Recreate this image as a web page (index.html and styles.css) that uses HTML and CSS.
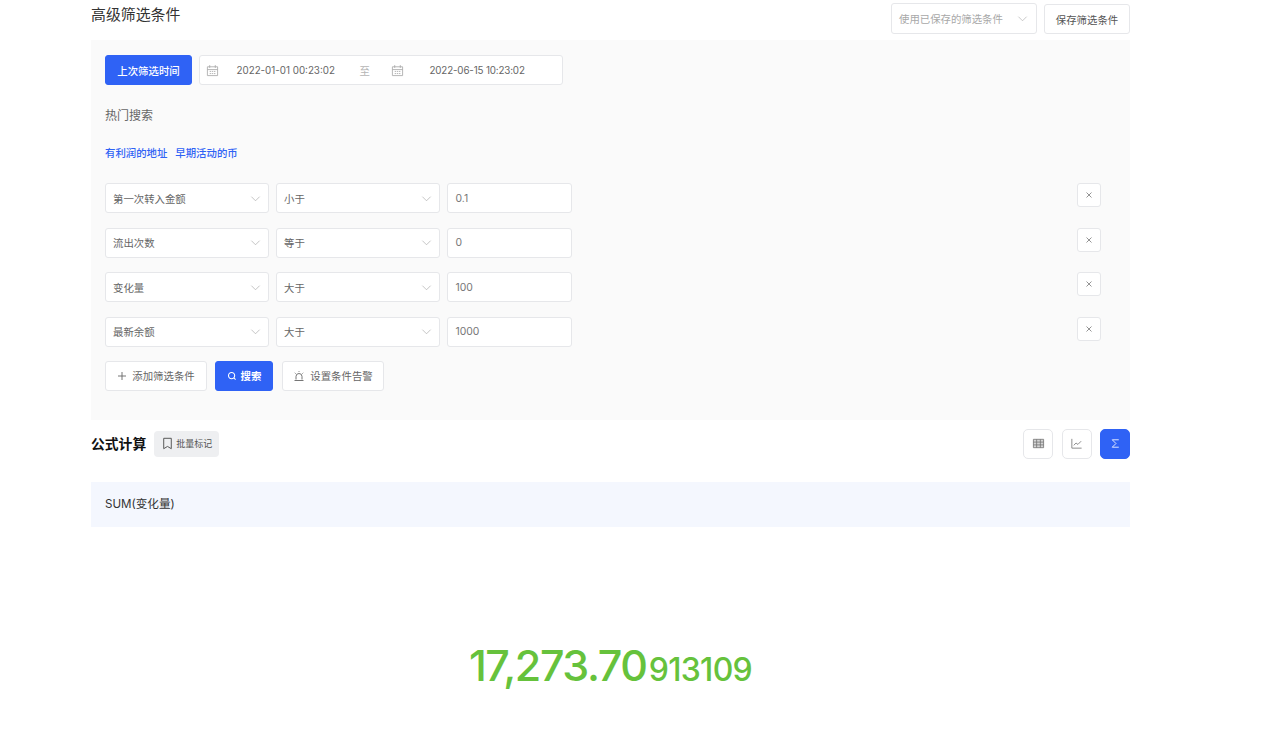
FILE: index.html
```html
<!DOCTYPE html>
<html lang="zh-CN">
<head>
<meta charset="utf-8">
<title>高级筛选条件</title>
<link rel="stylesheet" href="styles.css">
</head>
<body>
<main class="page">
  <header class="top">
    <h1 class="title">高级筛选条件</h1>
    <div class="top-actions">
      <div class="box saved">
        <span>使用已保存的筛选条件</span>
        <svg class="chev" viewBox="0 0 12 12"><path d="M1.500 4l4.500 4.500L10.500 4"/></svg>
      </div>
      <button class="box save">保存筛选条件</button>
    </div>
  </header>

  <section class="panel">
    <div class="date-row">
      <button class="primary last">上次筛选时间</button>
      <div class="box range">
        <svg class="cal" viewBox="0 0 14 14"><path d="M1.500 3h11v9.500h-11zM1.500 6h11M4 1.200v3M10 1.200v3M4 8h1.500M6.300 8h1.500M8.600 8h1.500M4 10.300h1.500M6.300 10.300h1.500M8.600 10.300h1.500"/></svg>
        <span class="date d1">2022-01-01 00:23:02</span>
        <span class="to">至</span>
        <svg class="cal" viewBox="0 0 14 14"><path d="M1.500 3h11v9.500h-11zM1.500 6h11M4 1.200v3M10 1.200v3M4 8h1.500M6.300 8h1.500M8.600 8h1.500M4 10.300h1.500M6.300 10.300h1.500M8.600 10.300h1.500"/></svg>
        <span class="date d2">2022-06-15 10:23:02</span>
      </div>
    </div>
    <div class="hot">热门搜索</div>
    <div class="links"><a>有利润的地址</a><a>早期活动的币</a></div>

    <div class="rows">
      <div class="row">
        <div class="box sel"><span>第一次转入金额</span><svg class="chev" viewBox="0 0 12 12"><path d="M1.500 4l4.500 4.500L10.500 4"/></svg></div>
        <div class="box sel"><span>小于</span><svg class="chev" viewBox="0 0 12 12"><path d="M1.500 4l4.500 4.500L10.500 4"/></svg></div>
        <div class="box val">0.1</div>
        <button class="box del"><svg viewBox="0 0 8 8"><path d="M1.500 1.500l5 5M6.500 1.500l-5 5"/></svg></button>
      </div>
      <div class="row">
        <div class="box sel"><span>流出次数</span><svg class="chev" viewBox="0 0 12 12"><path d="M1.500 4l4.500 4.500L10.500 4"/></svg></div>
        <div class="box sel"><span>等于</span><svg class="chev" viewBox="0 0 12 12"><path d="M1.500 4l4.500 4.500L10.500 4"/></svg></div>
        <div class="box val">0</div>
        <button class="box del"><svg viewBox="0 0 8 8"><path d="M1.500 1.500l5 5M6.500 1.500l-5 5"/></svg></button>
      </div>
      <div class="row">
        <div class="box sel"><span>变化量</span><svg class="chev" viewBox="0 0 12 12"><path d="M1.500 4l4.500 4.500L10.500 4"/></svg></div>
        <div class="box sel"><span>大于</span><svg class="chev" viewBox="0 0 12 12"><path d="M1.500 4l4.500 4.500L10.500 4"/></svg></div>
        <div class="box val">100</div>
        <button class="box del"><svg viewBox="0 0 8 8"><path d="M1.500 1.500l5 5M6.500 1.500l-5 5"/></svg></button>
      </div>
      <div class="row">
        <div class="box sel"><span>最新余额</span><svg class="chev" viewBox="0 0 12 12"><path d="M1.500 4l4.500 4.500L10.500 4"/></svg></div>
        <div class="box sel"><span>大于</span><svg class="chev" viewBox="0 0 12 12"><path d="M1.500 4l4.500 4.500L10.500 4"/></svg></div>
        <div class="box val">1000</div>
        <button class="box del"><svg viewBox="0 0 8 8"><path d="M1.500 1.500l5 5M6.500 1.500l-5 5"/></svg></button>
      </div>
    </div>

    <div class="actions">
      <button class="box act add"><svg viewBox="0 0 10 10"><path d="M5 1v8M1 5h8"/></svg>添加筛选条件</button>
      <button class="primary act search"><svg viewBox="0 0 12 12"><circle cx="5.500" cy="5.500" r="3.700"/><path d="M8.300 8.300l2 2"/></svg>搜索</button>
      <button class="box act alarm"><svg viewBox="0 0 12 12"><path d="M3 9.500V6.500a3 3 0 0 1 6 0v3M1.500 10.500h9M6 1v.8M1.800 2.800l.8.8M10.200 2.800l-.8.8"/></svg>设置条件告警</button>
    </div>
  </section>

  <section class="formula-head">
    <div class="formula-left">
      <h2 class="formula-title">公式计算</h2>
      <button class="mark"><svg viewBox="0 0 12 12"><path d="M2.500 1.200h7v9.600L6 8.700l-3.500 2.100z"/></svg>批量标记</button>
    </div>
    <div class="views">
      <button class="view"><svg viewBox="0 0 14 14"><path class="fillcell" d="M1.500 2.500h11v9h-11z"/><path d="M1.500 2.500h11v9h-11zM1.500 5.500h11M1.500 8.500h11M5 2.500v9M9 2.500v9"/></svg></button>
      <button class="view"><svg viewBox="0 0 14 14"><path d="M2 2v10h10.500M4 9l2.500-2.500 2 1.500L12 4.500"/></svg></button>
      <button class="view on"><svg viewBox="0 0 14 14"><path d="M10.500 3H3.500L7.500 7l-4 4h7"/></svg></button>
    </div>
  </section>

  <div class="expr">SUM(变化量)</div>

  <div class="result"><span class="big">17,273.70</span><span class="small">913109</span></div>
</main>
</body>
</html>
```

FILE: styles.css
```css
* { box-sizing: border-box; }
html, body { margin: 0; padding: 0; background: #fff; }
body {
  font-family: Inter, "Noto Sans CJK SC", sans-serif;
  color: #555;
  font-size: 10.400px;
}
button { font: inherit; cursor: pointer; }
svg { display: block; fill: none; stroke: currentColor; }

.page { width: 1039px; margin-left: 91px; height: 736px; overflow: hidden; }

.top { display: flex; justify-content: space-between; height: 40px; }
.title { margin: 6px 0 0; font-size: 14.900px; line-height: 18px; font-weight: 400; color: #333; }
.top-actions { display: flex; gap: 7px; align-items: flex-start; padding-top: 3px; }

.box { background: #fff; border: 1px solid #e6e7ea; border-radius: 3px; }
.saved { width: 146px; height: 31px; display: flex; align-items: center; justify-content: space-between; padding: 0 7px; color: #a8a8a8; }
.saved .chev { color: #b5b5b5; margin-right: 1px; }
.save { width: 86px; height: 30px; margin-top: 1px; color: #555; padding: 0; }
.chev { width: 11px; height: 11px; stroke-width: .8; color: #b0b0b0; flex: none; }

.panel { background: #fafafa; height: 380px; padding: 15px 14px 0; }

.primary { background: #2f62f5; border: 1px solid #2f62f5; border-radius: 3px; color: #fff; font-weight: 500; padding: 0; }
.date-row { display: flex; gap: 7px; height: 30px; }
.last { width: 87px; height: 30px; }
.range { width: 364px; height: 30px; display: flex; align-items: center; padding-left: 5.500px; color: #666; }
.cal { width: 13px; height: 13px; stroke-width: .9; color: #a8a8a8; flex: none; }
.date { font-size: 9.800px; white-space: nowrap; }
.d1 { margin-left: 18px; width: 123px; }
.to { color: #b5b5b5; width: 31px; }
.d2 { margin-left: 26px; letter-spacing: -.15px; }

.hot { margin-top: 22px; font-size: 12px; line-height: 18px; color: #666; }
.links { margin-top: 21px; height: 16px; line-height: 16px; display: flex; gap: 8px; color: #2f62f5; font-weight: 500; }

.rows { margin-top: 21px; display: flex; flex-direction: column; gap: 14.600px; }
.row { display: flex; gap: 7px; height: 30px; align-items: flex-start; }
.sel { width: 164px; height: 30px; display: flex; align-items: center; justify-content: space-between; padding: 0 7px; color: #666; }
.val { width: 125px; height: 30px; display: flex; align-items: center; padding: 0 7.500px; color: #777; }
.del { width: 24px; height: 24px; margin-left: 498px; padding: 0 0 0 7px; color: #888; }
.del svg { width: 8px; height: 8px; stroke-width: .9; }

.actions { display: flex; margin-top: 14px; gap: 8px; }
.act { height: 30px; display: flex; align-items: center; justify-content: center; }
.act svg { width: 10px; height: 10px; stroke-width: .9; margin-right: 5px; flex: none; }
.add { width: 102px; color: #666; }
.search { width: 58px; font-weight: 700; }
.search svg { stroke-width: 1.300; margin-right: 4px; }
.alarm { width: 102px; margin-left: 1px; color: #666; }
.alarm svg { width: 12px; height: 12px; }

.formula-head { display: flex; justify-content: space-between; align-items: center; height: 48px; padding-bottom: 1px; }
.formula-left { display: flex; align-items: center; gap: 8px; }
.formula-title { margin: 0 0 2px; font-size: 13.800px; font-weight: 700; color: #111; }
.mark { display: flex; align-items: center; gap: 2px; height: 26px; width: 65px; padding: 0 0 0 7px; background: #eeeff1; border: 0; border-radius: 4px; color: #555; font-size: 9px; }
.mark svg { width: 13px; height: 13px; stroke-width: .9; }
.views { display: flex; gap: 8.500px; }
.view { width: 30px; height: 30px; padding: 0; border: 1px solid #e6e7ea; border-radius: 5px; background: #fff; color: #777; display: flex; align-items: center; justify-content: center; }
.view svg { width: 13px; height: 13px; stroke-width: .9; }
.fillcell { fill: #d5d5d5; stroke: none; }
.view.on { background: #2f62f5; border-color: #2f62f5; color: #fff; }

.expr { margin-top: 14px; height: 45px; line-height: 45px; padding-left: 14px; background: #f4f7fe; font-size: 11.600px; color: #333; }

.result { margin-top: 110px; display: flex; justify-content: center; align-items: baseline; color: #66c23c; line-height: 56px; }
.big { font-size: 43px; font-weight: 500; letter-spacing: -1.400px; }
.small { font-size: 32px; font-weight: 500; letter-spacing: -.7px; margin-left: 2px; }
```
